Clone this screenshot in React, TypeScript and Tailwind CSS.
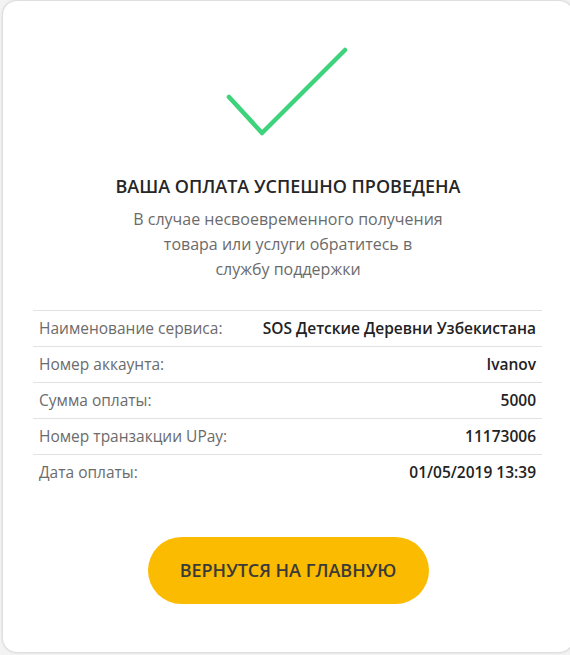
import React from 'react';

const rows = [
  { label: 'Наименование сервиса:', value: 'SOS Детские Деревни Узбекистана' },
  { label: 'Номер аккаунта:', value: 'Ivanov' },
  { label: 'Сумма оплаты:', value: '5000' },
  { label: 'Номер транзакции UPay:', value: '11173006' },
  { label: 'Дата оплаты:', value: '01/05/2019 13:39' },
];

const App: React.FC = () => {
  return (
    <div className="min-h-[655px] w-[570px] bg-[#f3f3f3] pl-[3px] pt-px font-['Open_Sans',sans-serif]">
      <div className="flex h-[651px] w-[570px] flex-col items-center rounded-[14px] bg-white shadow-[0_0_3px_rgba(0,0,0,0.25)]">
        <svg width="124" height="92" viewBox="0 0 124 92" className="mt-[46px]" fill="none">
          <polyline
            points="3,50 36,86 119,3"
            stroke="#3dd37b"
            strokeWidth="4.5"
            strokeLinecap="round"
            strokeLinejoin="round"
          />
        </svg>

        <h1 className="mt-[34px] text-[18px] font-semibold text-[#262626]">
          ВАША ОПЛАТА УСПЕШНО ПРОВЕДЕНА
        </h1>
        <p className="mt-[7px] text-center text-[16px] leading-[25px] text-[#6b6b6b]">
          В случае несвоевременного получения
          <br />
          товара или услуги обратитесь в
          <br />
          службу поддержки
        </p>

        <div className="mt-[28px] w-[509px] self-start ml-[30px] border-t border-[#e2e2e2]">
          {rows.map((r, i) => (
            <div
              key={r.label}
              className={`flex h-[36px] items-center justify-between px-[6px] ${
                i < rows.length - 1 ? 'border-b border-[#e2e2e2]' : ''
              }`}
            >
              <span className="text-[15.5px] text-[#6b6b6b]">{r.label}</span>
              <span className="text-[15.5px] font-semibold text-[#222]">{r.value}</span>
            </div>
          ))}
        </div>

        <button className="mt-[46px] h-[67px] w-[281px] rounded-full bg-[#fbbb00] text-[18px] font-semibold text-[#3a3a3a]">
          ВЕРНУТСЯ НА ГЛАВНУЮ
        </button>
      </div>
    </div>
  );
};

export default App;
